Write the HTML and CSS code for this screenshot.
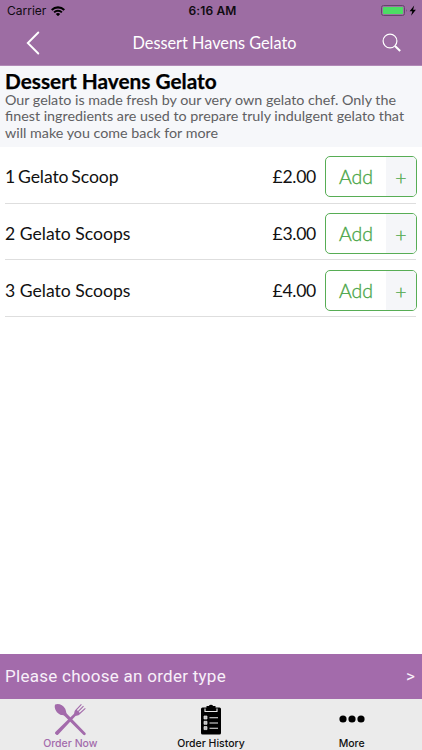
FILE: index.html
```html
<!DOCTYPE html>
<html lang="en">
<head>
<meta charset="utf-8">
<title>Dessert Havens Gelato</title>
<link rel="stylesheet" href="styles.css">
</head>
<body>
<div class="app">
  <header class="top">
    <div class="status">
      <div class="carrier"><span>Carrier</span>
        <svg class="wifi" viewBox="0 0 14 10"><path d="M0 3.2a10 10 0 0 1 14 0L12.6 4.7a8 8 0 0 0-11.2 0zM2.4 5.7a6.6 6.6 0 0 1 9.2 0L10.2 7.1a4.6 4.6 0 0 0-6.4 0zM4.8 8.1a3.2 3.2 0 0 1 4.4 0L7 10.2z"/></svg>
      </div>
      <time class="time">6:16 AM</time>
      <div class="power">
        <svg class="battery" viewBox="0 0 36 12"><rect x=".5" y=".5" width="23" height="10" rx="2" fill="none" stroke="#66456c"/><rect x="2" y="2" width="20" height="7" rx=".7" fill="#4cdc64"/><path d="M25 4q1.3 1.5 0 3z" fill="#66456c"/><path d="M33.2.6l-4.6 5.6h2.7l-1.2 4.6 4.8-6h-2.8z"/></svg>
      </div>
    </div>
    <nav class="bar">
      <svg class="back" viewBox="0 0 14 24"><path d="M12.3 1.5 1.8 12 12.3 22.5"/></svg>
      <h1 class="title">Dessert Havens Gelato</h1>
      <svg class="search" viewBox="0 0 20 20"><circle cx="8" cy="8" r="6.9"/><path d="m13 13 5.2 5"/></svg>
    </nav>
  </header>
  <section class="intro">
    <h2 class="heading">Dessert Havens Gelato</h2>
    <p class="copy"><span>Our gelato is made fresh by our very own gelato chef. Only the</span><br><span>finest ingredients are used to prepare truly indulgent gelato that</span><br><span>will make you come back for more</span></p>
  </section>
  <main class="menu">
    <div class="item"><span class="name first">1 Gelato Scoop</span><span class="price">£2.00</span><button class="add"><span class="label">Add</span><span class="plus">+</span></button></div>
    <div class="item"><span class="name">2 Gelato Scoops</span><span class="price">£3.00</span><button class="add"><span class="label">Add</span><span class="plus">+</span></button></div>
    <div class="item"><span class="name">3 Gelato Scoops</span><span class="price">£4.00</span><button class="add"><span class="label">Add</span><span class="plus">+</span></button></div>
  </main>
  <div class="order"><span class="choose">Please choose an order type</span><span class="next">&gt;</span></div>
  <footer class="tabs">
    <div class="tab active">
      <svg class="icon" viewBox="0 0 34 34"><path d="M2.2 1.5c3-1.5 8 .3 10 4.2 1 2 .7 3.8 1.7 5L32.5 30c1 1.5-1 3-2.2 1.8L11.5 13c-1.4-1.2-3-.4-5-1.7C2.6 9 .8 4 2.2 1.5z"/><path d="M3.4 31.8C2 31 1.5 30 2.6 28.8L20.8 11c.8-1 .3-2.5 1.3-3.8L28 1l.8.7-4.9 5.4 1 .9 5.2-5.2.8.8-5.2 5.2.9 1 5.4-4.9.7.8-6.2 5.7c-1.3 1.2-2.8.7-4 1.6L5 31.7q-.8.7-1.6.1z"/></svg>
      <span>Order Now</span>
    </div>
    <div class="tab">
      <svg class="icon" viewBox="0 0 34 34"><path d="M8.5 4.5h4V3h2.3a2.5 2.5 0 0 1 4.4 0h2.3v1.5h4q1.5 0 1.5 1.5v24q0 1.5-1.5 1.5h-17Q7 31.5 7 30V6q0-1.5 1.5-1.5z"/><path d="M11 5.5v3h12v-3M15.5 14.7H24M15.5 20H24M15.5 25.3H24" fill="none" stroke="#ebebeb" stroke-width="1.1"/><path d="M10 13h3v3h-3zM10 18.3h3v3h-3zM10 23.6h3v3h-3z" fill="#bbb" stroke="#ebebeb" stroke-width=".7"/></svg>
      <span>Order History</span>
    </div>
    <div class="tab">
      <svg class="icon" viewBox="0 0 34 34"><circle cx="8" cy="16" r="3.6"/><circle cx="17" cy="16" r="3.6"/><circle cx="26" cy="16" r="3.6"/></svg>
      <span>More</span>
    </div>
  </footer>
</div>
</body>
</html>
```
FILE: styles.css
```css
* { box-sizing: border-box; }
body { margin: 0; font-family: "Lato", sans-serif; color: #111; background: #fff; }
h1, h2, p { margin: 0; font-weight: 400; }
span, h1, h2, time { white-space: nowrap; }
.app { width: 422px; height: 750px; display: flex; flex-direction: column; overflow: hidden; }
.top { height: 66px; background: #9d6da3; border-bottom: 1px solid #b28ab7; }
.status { height: 22px; display: grid; grid-template-columns: 1fr auto 1fr; align-items: center; padding: 0 5px 0 7px; font: 12px/22px "Inter", sans-serif; color: #100b11; }
.carrier { display: flex; align-items: center; gap: 5px; }
.wifi { width: 14px; height: 10px; }
.time { font-weight: 600; letter-spacing: .15px; padding-left: 1px; }
.power { display: flex; justify-content: flex-end; }
.battery { width: 36px; height: 12px; }
.bar { height: 43px; display: grid; grid-template-columns: 60px 1fr 60px; align-items: center; }
.back { width: 14px; height: 24px; margin: -1px 0 0 26px; fill: none; stroke: #fff; stroke-width: 1.9; stroke-linecap: round; }
.title { text-align: center; color: #fff; font-size: 16.3px; line-height: 42px; padding-left: 7px; margin-top: -1px; }
.search { width: 20px; height: 20px; margin: -1px 0 0 20px; fill: none; stroke: #fff; stroke-width: 1.2; }
.search path { stroke-width: 2; }
.intro { height: 81px; background: #f6f7fa; padding: 2px 5px 0; }
.heading { font-size: 20.8px; font-weight: 700; line-height: 25px; color: #000; -webkit-text-stroke: .25px #000; }
.copy { font-size: 14.3px; line-height: 16.7px; color: #606062; margin-top: -1.3px; }
.menu { flex: 1; padding: 0 6px 0 5px; }
.item { height: 56.7px; display: flex; align-items: center; padding-top: 4px; border-bottom: 1px solid #dedede; font-size: 17.6px; }
.name { flex: 1; }
.first { letter-spacing: -.1px; word-spacing: -1.5px; }
.price { margin-right: 9px; letter-spacing: -.3px; }
.add { width: 92px; height: 41px; margin-right: -1px; display: flex; padding: 0; border: 1px solid #57ad55; border-radius: 5px; background: #fff; color: #48a546; overflow: hidden; font: 300 19.5px/39px "Lato", sans-serif; -webkit-text-stroke: .3px #48a546; }
.label { width: 60px; text-align: center; }
.plus { flex: 1; background: #f5f6f9; text-align: center; line-height: 41px; }
.order { height: 45px; padding: 0 7px 0 5px; background: #a36bab; color: #f8f0f9; display: flex; justify-content: space-between; align-items: center; font: 17px/47px "Roboto", sans-serif; }
.choose { letter-spacing: .27px; }
.next { line-height: 49px; }
.tabs { height: 51px; background: #ebebeb; display: grid; grid-template-columns: repeat(3, 1fr); font: 500 10.5px/13px "Inter", sans-serif; color: #111; }
.tab { display: flex; flex-direction: column; align-items: center; padding-top: 4px; }
.icon { width: 34px; height: 34px; }
.active { color: #a36bab; fill: #a36bab; }
```
